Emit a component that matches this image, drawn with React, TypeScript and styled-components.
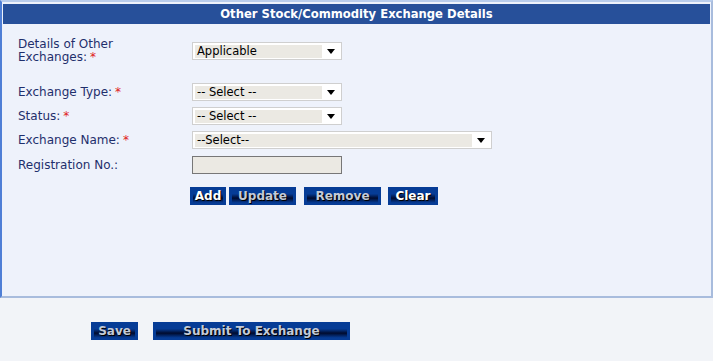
import styled, { createGlobalStyle } from "styled-components";

const labelColor = "#1f2f6c";
const font = `"DejaVu Sans", Verdana, sans-serif`;

const GlobalStyle = createGlobalStyle`
  html, body {
    margin: 0;
    padding: 0;
    background: #f2f4f8;
    font-family: ${font};
  }
`;

const Page = styled.div`
  width: 713px;
  height: 361px;
  background: #f2f4f8;
`;

const Panel = styled.section`
  box-sizing: border-box;
  width: 713px;
  height: 298px;
  background: #eef2fb;
  border-top: 2px solid #b9cdec;
  border-left: 2px solid #4f7fd6;
  border-right: 2px solid #a8bcdd;
  border-bottom: 2px solid #a8bcdd;
  padding: 2px 1px 0 1px;
`;

const Header = styled.div`
  height: 20px;
  background: #27509a;
  color: #ffffff;
  font-weight: bold;
  font-size: 11.6px;
  line-height: 20px;
  text-align: center;
`;

const Form = styled.div`
  display: flex;
  flex-direction: column;
  padding: 14px 0 0 15px;
`;

const Row = styled.div<{ $top?: number }>`
  display: flex;
  align-items: center;
  margin-top: ${(p) => p.$top ?? 0}px;
`;

const Label = styled.div`
  width: 174px;
  font-size: 12px;
  line-height: 13px;
  color: ${labelColor};
`;

const Req = styled.span`
  color: #e02020;
  margin-left: 3px;
`;

const SelectBox = styled.div<{ $w: number }>`
  box-sizing: border-box;
  width: ${(p) => p.$w}px;
  height: 18px;
  background: #ffffff;
  border: 1px solid #cfcfcf;
  display: flex;
  align-items: center;
  padding: 0 2px;
`;

const SelectText = styled.div`
  flex: 1;
  height: 13px;
  background: #ebe9e3;
  color: #000;
  font-size: 11.5px;
  line-height: 13px;
  padding-left: 2px;
  white-space: pre;
`;

const Arrow = styled.div`
  width: 17px;
  display: flex;
  justify-content: center;
  &::after {
    content: "";
    border-left: 4px solid transparent;
    border-right: 4px solid transparent;
    border-top: 5px solid #000;
  }
`;

const TextInput = styled.div`
  box-sizing: border-box;
  width: 150px;
  height: 18px;
  background: #ebe9e3;
  border: 1px solid #777;
`;

const Buttons = styled.div<{ $left: number; $top: number; $gap: number }>`
  display: flex;
  gap: ${(p) => p.$gap}px;
  margin-left: ${(p) => p.$left}px;
  margin-top: ${(p) => p.$top}px;
`;

const Btn = styled.div<{ $w: number; $dim?: boolean; $ml?: number }>`
  box-sizing: border-box;
  width: ${(p) => p.$w}px;
  height: 18px;
  margin-left: ${(p) => p.$ml ?? 0}px;
  background-color: #063c96;
  background-image: linear-gradient(
    #063c96 0%,
    #063c96 38%,
    #000b2e 62%,
    #063c96 88%
  );
  background-size: calc(100% - 6px) 100%;
  background-position: center;
  background-repeat: no-repeat;
  color: ${(p) => (p.$dim ? "#c3cad8" : "#ffffff")};
  font-size: 12px;
  font-weight: bold;
  line-height: 18px;
  text-align: center;
  text-shadow: 1px 1px 0 #000;
`;

const Footer = styled.div`
  display: flex;
  padding: 24px 0 0 91px;
  gap: 15px;
`;

function Select({ w, text }: { w: number; text: string }) {
  return (
    <SelectBox $w={w}>
      <SelectText>{text}</SelectText>
      <Arrow />
    </SelectBox>
  );
}

export default function App() {
  return (
    <Page>
      <GlobalStyle />
      <Panel>
        <Header>Other Stock/Commodity Exchange Details</Header>
        <Form>
          <Row>
            <Label>
              Details of Other
              <br />
              Exchanges:<Req>*</Req>
            </Label>
            <Select w={150} text="Applicable" />
          </Row>
          <Row $top={19}>
            <Label>
              Exchange Type:<Req>*</Req>
            </Label>
            <Select w={150} text="-- Select --" />
          </Row>
          <Row $top={6}>
            <Label>
              Status:<Req>*</Req>
            </Label>
            <Select w={150} text="-- Select --" />
          </Row>
          <Row $top={6}>
            <Label>
              Exchange Name:<Req>*</Req>
            </Label>
            <Select w={300} text="--Select--" />
          </Row>
          <Row $top={7}>
            <Label>Registration No.:</Label>
            <TextInput />
          </Row>
          <Buttons $left={172} $top={13} $gap={3}>
            <Btn $w={36}>Add</Btn>
            <Btn $w={67} $dim>
              Update
            </Btn>
            <Btn $w={77} $dim $ml={5}>
              Remove
            </Btn>
            <Btn $w={50} $ml={4}>
              Clear
            </Btn>
          </Buttons>
        </Form>
      </Panel>
      <Footer>
        <Btn $w={47} $dim>
          Save
        </Btn>
        <Btn $w={197} $dim>
          Submit To Exchange
        </Btn>
      </Footer>
    </Page>
  );
}
